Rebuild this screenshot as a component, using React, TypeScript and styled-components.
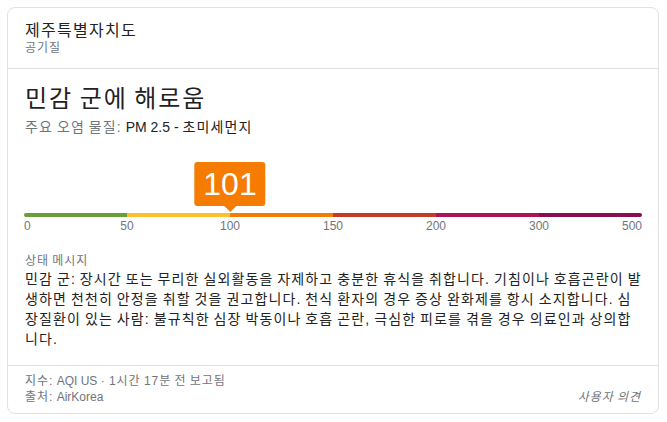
import React from "react";
import styled, { createGlobalStyle } from "styled-components";

const Global = createGlobalStyle`
  html, body { margin: 0; padding: 0; background: #fff; }
  body {
    font-family: "Liberation Sans", Arial, "Noto Sans CJK KR", sans-serif;
    color: #222;
  }
`;

const Card = styled.div`
  margin: 7px;
  width: 652px;
  box-sizing: border-box;
  border: 1px solid #dfe1e5;
  border-radius: 8px;
  background: #fff;
  overflow: hidden;
`;

const Header = styled.div`
  padding: 13px 17px 13px;
  border-bottom: 1px solid #dfe1e5;
`;

const Korean = styled.div`
  letter-spacing: 0.08em;
  word-spacing: -0.08em;
`;

const Title = styled(Korean)`
  font-size: 16px;
  line-height: 20px;
  color: #222;
`;

const Subtitle = styled(Korean)`
  font-size: 12px;
  line-height: 14px;
  color: #70757a;
`;

const Main = styled.div`
  padding: 14px 17px 16px;
  border-bottom: 1px solid #dfe1e5;
`;

const Heading = styled(Korean)`
  font-size: 24px;
  line-height: 32px;
  color: #222;
`;

const Pollutant = styled(Korean)`
  margin-top: 2px;
  font-size: 14px;
  line-height: 20px;
  color: #70757a;
`;

const Strong = styled.span`
  color: #222;
`;

const Latin = styled.span`
  letter-spacing: 0;
  word-spacing: 0;
`;

const Gauge = styled.div`
  position: relative;
  margin: 25px -1px 0;
  padding-top: 51px;
`;

const Badge = styled.div`
  position: absolute;
  top: 0;
  transform: translateX(-50%);
  height: 44px;
  padding: 0 9px;
  border-radius: 3px;
  background: #f57c00;
  color: #fff;
  font-size: 32px;
  line-height: 44px;
  white-space: nowrap;
  &::after {
    content: "";
    position: absolute;
    left: 50%;
    top: 44px;
    margin-left: -6px;
    border-left: 6px solid transparent;
    border-right: 6px solid transparent;
    border-top: 6px solid #f57c00;
  }
`;

const Bar = styled.div`
  display: flex;
  height: 4px;
  border-radius: 2px;
  overflow: hidden;
`;

const Segment = styled.div<{ $color: string }>`
  flex: 1;
  background: ${(p) => p.$color};
`;

const Ticks = styled.div`
  display: flex;
  justify-content: space-between;
  margin-top: 1px;
  font-size: 12px;
  line-height: 16px;
  color: #70757a;
`;

const Tick = styled.div<{ $align: "start" | "center" | "end" }>`
  width: 0;
  display: flex;
  white-space: nowrap;
  justify-content: ${(p) =>
    p.$align === "start" ? "flex-start" : p.$align === "end" ? "flex-end" : "center"};
`;

const StatusLabel = styled(Korean)`
  margin-top: 19px;
  font-size: 12px;
  line-height: 16px;
  color: #70757a;
`;

const Message = styled(Korean)`
  margin-right: -3px;
  font-size: 14px;
  line-height: 20px;
  color: #222;
  word-break: break-all;
`;

const Footer = styled.div`
  display: flex;
  justify-content: space-between;
  align-items: flex-end;
  padding: 7px 17px 8px;
  font-size: 12px;
  line-height: 16px;
  color: #70757a;
`;

const FooterLines = styled.div`
  display: flex;
  flex-direction: column;
`;

const Feedback = styled(Korean)`
  font-style: italic;
  color: #70757a;
`;

const segments = [
  { color: "#689f38" },
  { color: "#fbc02d" },
  { color: "#f57c00" },
  { color: "#c53929" },
  { color: "#ad1457" },
  { color: "#880e4f" },
];

const ticks = ["0", "50", "100", "150", "200", "300", "500"];
const breaks = [0, 50, 100, 150, 200, 300, 500];

function positionOf(value: number) {
  for (let i = 0; i < breaks.length - 1; i++) {
    if (value <= breaks[i + 1]) {
      const frac = (value - breaks[i]) / (breaks[i + 1] - breaks[i]);
      return ((i + frac) / (breaks.length - 1)) * 100;
    }
  }
  return 100;
}

export default function App() {
  const value = 101;
  const left = positionOf(100);
  return (
    <>
      <Global />
      <Card>
        <Header>
          <Title>제주특별자치도</Title>
          <Subtitle>공기질</Subtitle>
        </Header>
        <Main>
          <Heading>민감 군에 해로움</Heading>
          <Pollutant>
            주요 오염 물질: <Strong><Latin>PM 2.5 - </Latin>초미세먼지</Strong>
          </Pollutant>
          <Gauge>
            <Badge style={{ left: `${left}%` }}>{value}</Badge>
            <Bar>
              {segments.map((s, i) => (
                <Segment key={i} $color={s.color} />
              ))}
            </Bar>
            <Ticks>
              {ticks.map((t, i) => (
                <Tick
                  key={t}
                  $align={i === 0 ? "start" : i === ticks.length - 1 ? "end" : "center"}
                >
                  {t}
                </Tick>
              ))}
            </Ticks>
          </Gauge>
          <StatusLabel>상태 메시지</StatusLabel>
          <Message>
            민감 군: 장시간 또는 무리한 실외활동을 자제하고 충분한 휴식을 취합니다. 기침이나 호흡곤란이 발생하면 천천히 안정을 취할 것을 권고합니다. 천식 환자의 경우 증상 완화제를 항시 소지합니다. 심장질환이 있는 사람: 불규칙한 심장 박동이나 호흡 곤란, 극심한 피로를 겪을 경우 의료인과 상의합니다.
          </Message>
        </Main>
        <Footer>
          <FooterLines>
            <Korean>
              지수: <Latin>AQI US</Latin> · 1시간 17분 전 보고됨
            </Korean>
            <Korean>
              출처: <Latin>AirKorea</Latin>
            </Korean>
          </FooterLines>
          <Feedback>사용자 의견</Feedback>
        </Footer>
      </Card>
    </>
  );
}
